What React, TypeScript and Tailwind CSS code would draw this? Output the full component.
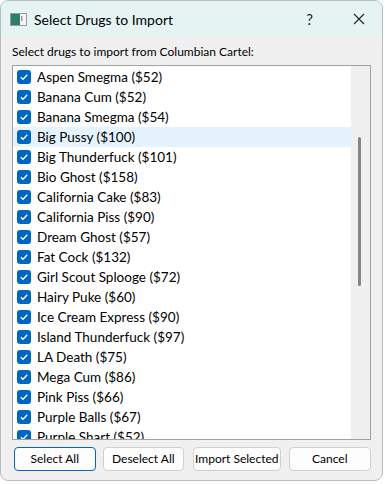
import React, { useState } from "react";

const drugs: [string, number][] = [
  ["Aspen Smegma", 52],
  ["Banana Cum", 52],
  ["Banana Smegma", 54],
  ["Big Pussy", 100],
  ["Big Thunderfuck", 101],
  ["Bio Ghost", 158],
  ["California Cake", 83],
  ["California Piss", 90],
  ["Dream Ghost", 57],
  ["Fat Cock", 132],
  ["Girl Scout Splooge", 72],
  ["Hairy Puke", 60],
  ["Ice Cream Express", 90],
  ["Island Thunderfuck", 97],
  ["LA Death", 75],
  ["Mega Cum", 86],
  ["Pink Piss", 66],
  ["Purple Balls", 67],
  ["Purple Shart", 52],
];

const CheckBox = ({ checked }: { checked: boolean }) => (
  <div
    className={
      checked
        ? "w-[14px] h-[14px] rounded-[3px] bg-[#0067c0] flex items-center justify-center shrink-0"
        : "w-[14px] h-[14px] rounded-[3px] border border-[#8a8a8a] bg-white shrink-0"
    }
  >
    {checked && (
      <svg width="10" height="10" viewBox="0 0 10 10">
        <path d="M1.8 5.2 L4 7.3 L8.3 2.8" fill="none" stroke="white" strokeWidth="1.3" />
      </svg>
    )}
  </div>
);

const WindowIcon = () => (
  <svg width="17" height="13" viewBox="0 0 17 13">
    <rect x="0.5" y="0.5" width="16" height="12" fill="#f4f4f4" stroke="#9a9a9a" />
    <rect x="1" y="1" width="9" height="11" fill="#2f7d6c" />
    <rect x="11" y="3" width="1.5" height="5" fill="#9a9a9a" />
  </svg>
);

const App: React.FC = () => {
  const [checked, setChecked] = useState<boolean[]>(drugs.map(() => true));

  const toggle = (i: number) => {
    setChecked(checked.map((c, j) => (j === i ? !c : c)));
  };

  const buttonClass =
    "h-[24px] rounded-[4px] bg-[#fdfdfd] border text-[12px] text-black whitespace-nowrap";

  return (
    <div
      className="w-[385px] h-[484px] bg-white"
      style={{ fontFamily: 'Lato, "Noto Sans", sans-serif' }}
    >
      <div className="w-[383px] h-[481px] rounded-[8px] border border-[#b9bdbd] overflow-hidden flex flex-col bg-[#f0f0f0]">
        {/* title bar */}
        <div className="h-[36px] bg-[#e5f4f3] flex items-center shrink-0">
          <div className="ml-[9px] flex items-center">
            <WindowIcon />
          </div>
          <span className="ml-[7px] text-[14px] text-black">Select Drugs to Import</span>
          <span className="ml-auto mr-[40px] text-[15px] text-[#222]">?</span>
          <svg className="mr-[17px]" width="12" height="12" viewBox="0 0 12 12">
            <path d="M1 1 L11 11 M11 1 L1 11" stroke="#222" strokeWidth="1.1" />
          </svg>
        </div>

        {/* body */}
        <div className="flex-1 flex flex-col px-[11px]">
          <div className="h-[28px] flex items-center text-[12px] text-black pt-[2px]">
            Select drugs to import from Columbian Cartel:
          </div>
          <div className="h-[375px] border border-[#a0a0a0] bg-white flex overflow-hidden">
            <div className="flex-1 pt-[1px]">
              {drugs.map(([name, price], i) => (
                <div
                  key={name}
                  onClick={() => toggle(i)}
                  className={
                    i === 3
                      ? "h-[20px] flex items-center gap-[6px] pl-[4px] bg-[#e5f3ff]"
                      : "h-[20px] flex items-center gap-[6px] pl-[4px]"
                  }
                >
                  <CheckBox checked={checked[i]} />
                  <span className="text-[13.5px] text-black whitespace-nowrap">
                    {name} (${price})
                  </span>
                </div>
              ))}
            </div>
            <div className="w-[19px] bg-[#f0f0f0] shrink-0 relative">
              <div className="absolute left-[7px] top-[71px] w-[3px] h-[149px] rounded-full bg-[#858585]" />
            </div>
          </div>
          <div className="flex items-center mt-[7px] pl-[2px]">
            <button className={buttonClass + " w-[82px] border-[#0067c0]"}>Select All</button>
            <button className={buttonClass + " w-[82px] ml-[7px] border-[#d0d0d0]"}>Deselect All</button>
            <button className={buttonClass + " w-[88px] ml-[9px] border-[#d0d0d0]"}>Import Selected</button>
            <button className={buttonClass + " w-[83px] ml-[8px] border-[#d0d0d0]"}>Cancel</button>
          </div>
        </div>
      </div>
    </div>
  );
};

export default App;
